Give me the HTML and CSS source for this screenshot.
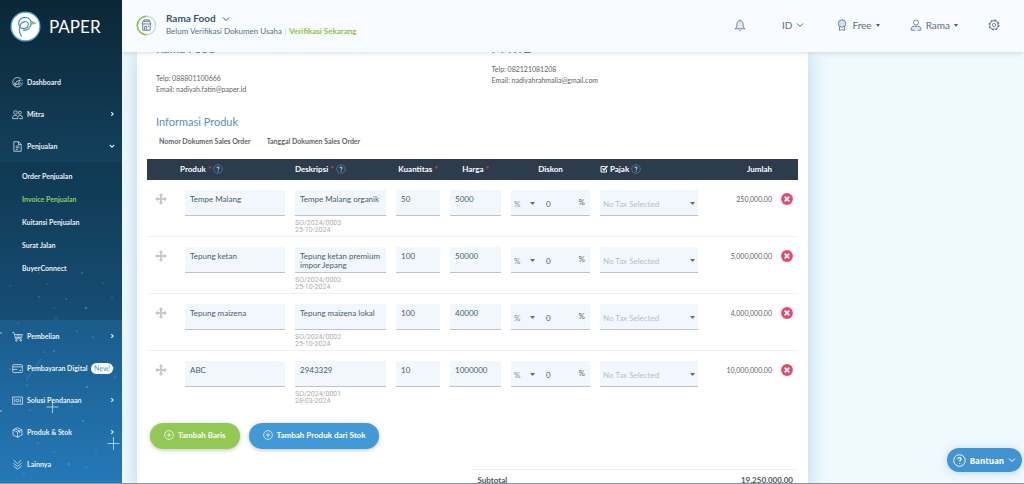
FILE: index.html
```html
<!DOCTYPE html>
<html lang="id">
<head>
<meta charset="utf-8">
<meta name="viewport" content="width=device-width, initial-scale=1">
<title>Paper - Invoice Penjualan</title>
<link rel="stylesheet" href="styles.css">
</head>
<body>
<svg class="defs" aria-hidden="true">
  <symbol id="i-down" viewBox="0 0 8 8"><path d="M1 2.500l3 3 3-3"/></symbol>
  <symbol id="i-right" viewBox="0 0 8 8"><path d="M3 1.500l2.500 2.500L3 6.500"/></symbol>
  <symbol id="i-help" viewBox="0 0 10 10"><circle cx="5" cy="5" r="4.300" stroke="#3a7ca8" stroke-width=".9"/><path d="M3.900 4.100c0-1.500 2.300-1.400 2.300-.1 0 .8-1.100.8-1.100 1.700M5.100 6.700v.8" stroke="#dcebf5" stroke-width="1"/></symbol>
  <symbol id="i-move" viewBox="0 0 12 12"><path d="M6 2v8M2 6h8" stroke-width="1.900"/><path d="M6 0l2.400 2.900H3.600zM6 12l2.400-2.900H3.600zM0 6l2.900-2.400v4.800zM12 6L9.100 3.600v4.800z" fill="currentColor" stroke="none"/></symbol>
  <symbol id="i-del" viewBox="0 0 12 12"><circle cx="6" cy="6" r="5.900" fill="#e2496b" stroke="none"/><path d="M3.700 3.700l4.600 4.600M8.300 3.700L3.700 8.300" stroke="#fff" stroke-width="1.800"/></symbol>
  <symbol id="i-plus" viewBox="0 0 10 10"><circle cx="5" cy="5" r="4.400"/><path d="M5 2.800v4.400M2.800 5h4.400"/></symbol>
</svg>
<div class="app">
  <aside class="sidebar">
    <svg class="stars" viewBox="0 0 122 214" aria-hidden="true">
      <g fill="#9fd0f0" stroke="none" opacity=".7">
        <circle cx="39" cy="4" r=".6"/><circle cx="47" cy="15" r=".6"/><circle cx="10" cy="17" r=".6"/><circle cx="82" cy="4" r=".7"/><circle cx="103" cy="14" r=".6"/><circle cx="39" cy="28" r=".7"/><circle cx="66" cy="30" r=".7"/><circle cx="86" cy="39" r=".9"/><circle cx="112" cy="28" r=".6"/><circle cx="54" cy="39" r=".6"/><circle cx="18" cy="54" r=".6"/><circle cx="56" cy="50" r=".6"/><circle cx="1" cy="64" r=".9"/><circle cx="77" cy="62" r=".6"/><circle cx="44" cy="83" r=".6"/><circle cx="54" cy="82" r=".7"/><circle cx="93" cy="68" r=".6"/><circle cx="10" cy="100" r=".6"/><circle cx="69" cy="96" r=".6"/><circle cx="87" cy="118" r=".8"/><circle cx="27" cy="116" r=".5"/><circle cx="115" cy="108" r=".6"/><circle cx="1" cy="142" r=".9"/><circle cx="30" cy="141" r=".6"/><circle cx="39" cy="133" r=".5"/><circle cx="83" cy="152" r=".7"/><circle cx="13" cy="164" r=".5"/><circle cx="72" cy="137" r=".5"/><circle cx="38" cy="174" r=".6"/><circle cx="54" cy="183" r=".6"/><circle cx="96" cy="184" r=".5"/><circle cx="69" cy="195" r=".7"/><circle cx="86" cy="198" r=".6"/><circle cx="24" cy="204" r=".5"/>
      </g>
      <path d="M26 111l15-21" stroke="#6fa9b4" stroke-width=".6" opacity=".6"/>
      <path d="M52.500 132v12M46.500 138h12M113.500 168v13M107.500 174.500h12" stroke="#d4eafa" stroke-width=".9" opacity=".8"/>
    </svg>
    <a class="brand" href="#">
      <svg class="brand-mark" viewBox="0 0 30 30" aria-hidden="true"><circle cx="15" cy="15" r="14" fill="#fff" stroke="#4f9bd0" stroke-width="1.200"/><path d="M11.500 24.500C8 21 8.500 13 12.500 10.800c3-1.600 6 .2 5.200 3.200-.8 2.800-4.700 4-7.200 2.200C6.500 13 8.500 6.800 14 6.200c5-.4 7.800 3.800 6 8-1.200 3-4 4.600-7.300 4.600" fill="none" stroke="#4a97cb" stroke-width="1.200"/><path d="M20 9l6 3.200-5.200 1.100z" fill="#8bc34a" stroke="none"/></svg>
      <span>PAPER</span>
    </a>
    <nav class="menu">
      <a href="#"><svg viewBox="0 0 12 12"><path d="M10 2.400A5.200 5.200 0 1 0 11.200 6M11.100 4.500a5 5 0 0 0-.6-1.500"/><path d="M8.800 3.200L7 7.200l-3.600 1.600L5 5zM3 6a3 3 0 0 0 .4 2.800M9 6a3 3 0 0 1-2.500 3"/></svg><span>Dashboard</span></a>
      <a href="#"><svg viewBox="0 0 12 12"><circle cx="3.800" cy="3.800" r="1.900"/><circle cx="8.500" cy="4" r="1.600"/><path d="M.7 10.500V9c0-2.700 5.800-2.700 5.800 0v1.500zM7 7.300c1.800-.8 4.300-.2 4.300 1.600v1.600H8"/></svg><span>Mitra</span><svg class="chev"><use href="#i-right"/></svg></a>
      <a href="#"><svg viewBox="0 0 12 12"><path d="M2 .8h5.200L10 3.600v7.600H2zM7 .8v3h3M4 5.500h4M4 7.300h4M4 9.200h2.500"/></svg><span>Penjualan</span><svg class="chev"><use href="#i-down"/></svg></a>
      <div class="submenu">
        <a href="#">Order Penjualan</a>
        <a href="#" class="active">Invoice Penjualan</a>
        <a href="#">Kuitansi Penjualan</a>
        <a href="#">Surat Jalan</a>
        <a href="#">BuyerConnect</a>
      </div>
      <a href="#"><svg viewBox="0 0 12 12"><path d="M.3 1.800h1.900L4 8.500h6.500M3 3.800h8.300l-1 3.300H3.600M4.800 5.400h4.600"/><circle cx="4.800" cy="10.300" r=".9"/><circle cx="9.600" cy="10.300" r=".9"/></svg><span>Pembelian</span><svg class="chev"><use href="#i-right"/></svg></a>
      <a href="#"><svg viewBox="0 0 12 12"><rect x=".8" y="1.800" width="10.500" height="8.600" rx="1"/><path d="M.8 4.200h10.500M.8 7h5M7.800 8.200h2"/></svg><span>Pembayaran Digital</span><b class="badge">New!</b><svg class="chev"><use href="#i-right"/></svg></a>
      <a href="#"><svg viewBox="0 0 12 12"><rect x=".8" y="2.200" width="10.500" height="7.800"/><circle cx="6" cy="6.100" r="1.500"/><path d="M3 4v4.200M9.100 4v4.200"/></svg><span>Solusi Pendanaan</span><svg class="chev"><use href="#i-right"/></svg></a>
      <a href="#"><svg viewBox="0 0 12 12"><path d="M6 .8l4.900 2.300v5.700L6 11.200 1.100 8.800V3.100zM1.100 3.100L6 5.500l4.900-2.400M6 5.500v5.700M3.500 2l4.900 2.400v2.400"/></svg><span>Produk &amp; Stok</span><svg class="chev"><use href="#i-right"/></svg></a>
      <a href="#"><svg viewBox="0 0 12 12"><path d="M1.500 4.600L6 8l4.500-3.400M1.500 7.600L6 11l4.500-3.400M1.800 1.300L6 5l4.200-3.700"/></svg><span>Lainnya</span></a>
    </nav>
  </aside>

  <div class="page">
    <header class="topbar">
      <svg class="shop" viewBox="0 0 20 20" aria-hidden="true"><circle cx="10" cy="10" r="8.800" stroke="#cfd8dd" stroke-width="1.300"/><path d="M10 18.800A8.800 8.800 0 0 1 10 1.200" stroke="#8cc63f" stroke-width="1.500"/><path d="M6.500 8.500v6h7v-6M5.800 8.500h8.400l-.9-2.500H6.700zM7.500 6V4.700h5V6M8.200 14.500v-3.500h2v3.500M11.400 11h1" stroke="#5c7a8f" stroke-width=".9"/></svg>
      <div class="company">
        <button class="company-name" type="button">Rama Food <svg><use href="#i-down"/></svg></button>
        <p>Belum Verifikasi Dokumen Usaha <i></i> <a href="#">Verifikasi Sekarang</a></p>
      </div>
      <div class="tools">
        <button type="button" aria-label="Notifikasi"><svg class="ico" viewBox="0 0 12 12"><path d="M6 .5v1M2.500 8.500c.4-.7.3-2 .4-3.500C3.100 3 4.300 1.700 6 1.700S8.900 3 9.100 5c.1 1.500 0 2.800.4 3.500l1.500 1.300H1zM5 11.400c.7.4 1.500.2 1.800-.6" fill="#dcebf6"/></svg></button>
        <button type="button" class="lang">ID <svg><use href="#i-down"/></svg></button>
        <button type="button"><svg class="ico" viewBox="0 0 12 12"><circle cx="6" cy="4.500" r="3.700" fill="#cfe3f2"/><path d="M3.500 7.500v4l2.500-1 2.500 1v-4" /></svg>Free <span class="caret"></span></button>
        <button type="button"><svg class="ico" viewBox="0 0 12 12"><circle cx="6" cy="3.500" r="2.500"/><path d="M1.200 11.200V9.500C1.200 7.500 4 7.300 6 7.300s4.800.2 4.800 2.200v1.700h-3M1.200 11.200h4" fill="#dcebf6"/></svg>Rama <span class="caret"></span></button>
        <button type="button" aria-label="Pengaturan"><svg class="ico" viewBox="0 0 12 12"><circle cx="6" cy="6" r="4.900" stroke-width="1.100" stroke-dasharray="2.200 1.600"/><circle cx="6" cy="6" r="4.100"/><circle cx="6" cy="6" r="1.600"/></svg></button>
      </div>
    </header>

    <main class="content">
      <section class="card">
        <div class="parties">
          <div class="party from"><h2>Rama Food</h2><p>Telp: 088801100666<br>Email: nadiyah.fatin@paper.id</p></div>
          <div class="party to"><h2>PT XYZ</h2><p>Telp: 082121081208<br>Email: nadiyahrahmalia@gmail.com</p></div>
        </div>
        <h3>Informasi Produk</h3>
        <div class="orders"><span>Nomor Dokumen Sales Order</span><span>Tanggal Dokumen Sales Order</span></div>

        <table class="items">
          <colgroup><col class="c-move"><col class="c-prod"><col class="c-desc"><col class="c-qty"><col class="c-price"><col class="c-disc"><col class="c-tax"><col class="c-sum"><col class="c-del"></colgroup>
          <thead>
            <tr>
              <th colspan="2" class="h-prod">Produk <em>*</em> <svg><use href="#i-help"/></svg></th>
              <th class="left">Deskripsi <em>*</em> <svg><use href="#i-help"/></svg></th>
              <th>Kuantitas <em>*</em></th>
              <th>Harga <em>*</em></th>
              <th>Diskon</th>
              <th class="left"><label><input type="checkbox" checked> Pajak</label> <svg><use href="#i-help"/></svg></th>
              <th class="right">Jumlah</th>
              <th></th>
            </tr>
          </thead>
          <tbody>
            <tr>
              <td class="move"><svg><use href="#i-move"/></svg></td>
              <td><textarea class="field" aria-label="Produk">Tempe Malang</textarea></td>
              <td><textarea class="field" aria-label="Deskripsi">Tempe Malang organik</textarea><small>SO/2024/0003<br>25-10-2024</small></td>
              <td><input class="field" aria-label="Kuantitas" value="50"></td>
              <td><input class="field" aria-label="Harga" value="5000"></td>
              <td><div class="discount"><select class="field" aria-label="Jenis diskon"><option>%</option></select><input class="field" aria-label="Diskon" value="0"><span>%</span></div></td>
              <td><select class="field tax" aria-label="Pajak"><option>No Tax Selected</option></select></td>
              <td class="sum">250,000.00</td>
              <td class="del"><button type="button" aria-label="Hapus"><svg><use href="#i-del"/></svg></button></td>
            </tr>
            <tr>
              <td class="move"><svg><use href="#i-move"/></svg></td>
              <td><textarea class="field" aria-label="Produk">Tepung ketan</textarea></td>
              <td><textarea class="field" aria-label="Deskripsi">Tepung ketan premium impor Jepang</textarea><small>SO/2024/0002<br>25-10-2024</small></td>
              <td><input class="field" aria-label="Kuantitas" value="100"></td>
              <td><input class="field" aria-label="Harga" value="50000"></td>
              <td><div class="discount"><select class="field" aria-label="Jenis diskon"><option>%</option></select><input class="field" aria-label="Diskon" value="0"><span>%</span></div></td>
              <td><select class="field tax" aria-label="Pajak"><option>No Tax Selected</option></select></td>
              <td class="sum">5,000,000.00</td>
              <td class="del"><button type="button" aria-label="Hapus"><svg><use href="#i-del"/></svg></button></td>
            </tr>
            <tr>
              <td class="move"><svg><use href="#i-move"/></svg></td>
              <td><textarea class="field" aria-label="Produk">Tepung maizena</textarea></td>
              <td><textarea class="field" aria-label="Deskripsi">Tepung maizena lokal</textarea><small>SO/2024/0002<br>25-10-2024</small></td>
              <td><input class="field" aria-label="Kuantitas" value="100"></td>
              <td><input class="field" aria-label="Harga" value="40000"></td>
              <td><div class="discount"><select class="field" aria-label="Jenis diskon"><option>%</option></select><input class="field" aria-label="Diskon" value="0"><span>%</span></div></td>
              <td><select class="field tax" aria-label="Pajak"><option>No Tax Selected</option></select></td>
              <td class="sum">4,000,000.00</td>
              <td class="del"><button type="button" aria-label="Hapus"><svg><use href="#i-del"/></svg></button></td>
            </tr>
            <tr>
              <td class="move"><svg><use href="#i-move"/></svg></td>
              <td><textarea class="field" aria-label="Produk">ABC</textarea></td>
              <td><textarea class="field" aria-label="Deskripsi">2943329</textarea><small>SO/2024/0001<br>28-03-2024</small></td>
              <td><input class="field" aria-label="Kuantitas" value="10"></td>
              <td><input class="field" aria-label="Harga" value="1000000"></td>
              <td><div class="discount"><select class="field" aria-label="Jenis diskon"><option>%</option></select><input class="field" aria-label="Diskon" value="0"><span>%</span></div></td>
              <td><select class="field tax" aria-label="Pajak"><option>No Tax Selected</option></select></td>
              <td class="sum">10,000,000.00</td>
              <td class="del"><button type="button" aria-label="Hapus"><svg><use href="#i-del"/></svg></button></td>
            </tr>
          </tbody>
        </table>

        <div class="actions">
          <button type="button" class="pill green"><svg><use href="#i-plus"/></svg>Tambah Baris</button>
          <button type="button" class="pill blue"><svg><use href="#i-plus"/></svg>Tambah Produk dari Stok</button>
        </div>
        <div class="totals"><span>Subtotal</span><span>19,250,000.00</span></div>
      </section>
    </main>
  </div>
  <button type="button" class="help"><svg class="q" viewBox="0 0 14 14"><circle cx="7" cy="7" r="6.200"/><path d="M5.300 5.600c0-2.400 3.500-2.200 3.500-.1 0 1.300-1.700 1.300-1.700 2.700M7.100 9.600v1.100" stroke-width="1.200"/></svg>Bantuan<svg><use href="#i-down"/></svg></button>
</div>
</body>
</html>
```
FILE: styles.css
```css
* { box-sizing: border-box; }
body {
  margin: 0;
  font: 8px/11px Lato, "Liberation Sans", sans-serif;
  color: #5e6468;
}
h2, h3, p { margin: 0; font-weight: 400; }
a { color: inherit; text-decoration: none; }
button { font: inherit; color: inherit; border: 0; background: none; padding: 0; }
svg { width: 8px; height: 8px; flex: none; fill: none; stroke: currentColor; }
.defs { position: absolute; width: 0; height: 0; }

.app {
  position: relative;
  display: flex;
  height: 100vh;
  overflow: hidden;
  border-bottom: 1px solid #8b959c;
}

/* Sidebar */
.sidebar {
  position: relative;
  flex: none;
  width: 122px;
  overflow: hidden;
  color: #e6eff5;
  background: linear-gradient(#0b2736, #13415e 35%, #1a5a88 65%, #2479b7);
}
.stars { position: absolute; left: 0; bottom: 0; width: 122px; height: 214px; }
.brand { position: relative; display: flex; align-items: center; gap: 8px; height: 52px; padding-left: 10px; font-size: 17px; color: #fff; }
.brand-mark { width: 31px; height: 31px; }
.menu { position: relative; padding-top: 14px; font-size: 7px; font-weight: 700; }
.menu > a { display: flex; align-items: center; gap: 4px; height: 32px; padding: 0 7px 0 12px; white-space: nowrap; }
.menu > a > svg { width: 11px; height: 11px; stroke-width: .8; }
.menu > a > .chev { width: 6px; height: 6px; margin-left: auto; stroke-width: 1.5; }
.submenu { padding: 3px 0 40px; background: rgba(10, 30, 45, .22); }
.submenu a { display: block; padding-left: 22px; line-height: 23px; }
.submenu .active { color: #86cf6a; }
.badge { position: absolute; left: 91px; padding: 0 3px; border-radius: 6px; background: #fff; color: #4b9cd3; font-weight: 400; }

/* Top bar */
.page { flex: 1; min-width: 0; display: flex; flex-direction: column; background: #f0f9fd; }
.topbar {
  position: relative;
  z-index: 1;
  flex: none;
  display: flex;
  align-items: center;
  height: 52px;
  padding: 0 24px 2px 14px;
  background: #f8fbff;
  box-shadow: 0 1px 5px rgba(40, 70, 90, .18);
  color: #557086;
}
.shop { width: 21px; height: 21px; }
.company { margin-left: 9px; }
.company-name { display: flex; align-items: center; gap: 6px; font-size: 10px; font-weight: 700; line-height: 13px; color: #35566f; }
.company p { display: flex; align-items: center; gap: 3px; line-height: 13px; }
.company i { width: 1px; height: 7px; background: #dbe3e8; }
.company p a { color: #8bc640; font-weight: 700; }
.tools { display: flex; align-items: center; gap: 30px; margin-left: auto; }
.tools button { display: flex; align-items: center; gap: 4px; font-size: 10px; }
.tools .lang { margin: 0 2px 0 6px; }
.ico { width: 12px; height: 12px; stroke-width: .8; }
.caret { border: 2px solid transparent; border-top: 3px solid #456078; border-bottom: 0; }

/* Document */
.content { flex: 1; min-height: 0; overflow: hidden; display: grid; grid-template-columns: 671fr 216fr; padding-left: 15px; }
.card { padding: 0 10px; background: #fff; box-shadow: 0 0 18px rgba(80, 160, 210, .4); }
.parties { display: grid; grid-template-columns: 1fr 1fr; margin: -11px -10px 0; }
.party { padding-left: 19px; }
.party p { font-size: 7px; }
.party h2 { font-size: 12px; line-height: 16px; color: #4a86b0; }
.from p { margin-top: 16px; }
.to p { margin-top: 7px; }
h3 { margin: 19px 0 5px 9px; font-size: 11px; line-height: 16px; color: #5b90b8; }
.orders { display: flex; gap: 16px; margin: 0 0 12px 12px; font-size: 7px; line-height: 12px; font-weight: 700; }

.items { width: 100%; table-layout: fixed; border-collapse: separate; border-spacing: 0; }
.c-move { width: 38px; }
.c-desc { width: 101px; }
.c-qty { width: 54px; }
.c-price { width: 61px; }
.c-disc { width: 89px; }
.c-tax { width: 108px; }
.c-sum { width: 64px; }
.c-del { width: 26px; }
.items th { height: 21px; padding: 0 10px 2px 0; background: #2c3c4d; color: #fff; line-height: 12px; white-space: nowrap; }
.items th svg { width: 10px; height: 10px; vertical-align: middle; }
.items th em { color: #ff2a2a; font-style: normal; }
.items .left, .items .h-prod { text-align: left; }
.items .h-prod { padding-left: 33px; }
.items th.right { text-align: right; padding-right: 0; }
.items th input {
  appearance: none;
  width: 8px;
  height: 8px;
  margin: 0;
  vertical-align: middle;
  background: url("data:image/svg+xml,%3Csvg xmlns='http://www.w3.org/2000/svg' viewBox='0 0 8 8' fill='none' stroke='white'%3E%3Cpath d='M6.500 4.500V7H1V1.500h4.500'/%3E%3Cpath d='M2.500 3.500l1.500 1.500L7.500 1' stroke-width='1.300'/%3E%3C/svg%3E") center / 8px no-repeat;
}
.items td { height: 57px; padding: 10px 10px 0 0; vertical-align: top; border-bottom: 1px solid #f1f1f1; }
.items tbody tr:last-child td { border-bottom: 0; }
.items td.move { padding: 13px 0 0 8px; color: #c3cbd1; }
.items .move svg { width: 12px; height: 12px; }
.field {
  display: block;
  width: 100%;
  height: 26px;
  margin: 0;
  padding: 5px 4px 0 5px;
  border: 0;
  border-bottom: 1px solid #b9c4cc;
  border-radius: 0;
  background: #f1f7fc;
  font: 8px/9px Lato, "Liberation Sans", sans-serif;
  color: #485e6e;
  resize: none;
  overflow: hidden;
}
input.field { padding: 0 5px 7px; }
select.field {
  appearance: none;
  padding: 4px 3px 0;
  color: #7d8d99;
  background: #f1f7fc url("data:image/svg+xml,%3Csvg xmlns='http://www.w3.org/2000/svg' viewBox='0 0 5 3'%3E%3Cpath d='M0 0h5L2.500 3z' fill='%235b6b78'/%3E%3C/svg%3E") right 3px top 12px / 5px 3px no-repeat;
}
select.tax { color: #b4c1ca; }
.discount { position: relative; display: grid; grid-template-columns: 27px 1fr; }
.discount input.field { padding: 2px 8px 0; }
.discount span { position: absolute; right: 5px; top: 6px; line-height: 12px; }
.items small { display: block; margin-top: 4px; font: 7px/7px Roboto, sans-serif; color: #adadad; }
.items td.sum { padding-right: 0; font-size: 7px; line-height: 18px; text-align: right; }
.items td.del { padding: 13px 0 0 9px; }
.del button { display: block; }
.del svg { display: block; width: 12px; height: 12px; }

.actions { display: flex; gap: 9px; padding: 15px 3px 0; }
.pill { display: flex; align-items: center; gap: 4px; height: 26px; padding: 0 14px 2px; border-radius: 13px; color: #fff; font-weight: 700; box-shadow: 0 1px 4px rgba(0, 0, 0, .25); }
.pill svg { width: 10px; height: 10px; stroke-width: .7; }
.green { background: #92c954; }
.blue { background: #4299d7; }
.totals { display: flex; justify-content: space-between; width: 50%; margin: 20px 0 0 auto; padding: 5px 5px; border-top: 1px solid #eee; font-weight: 700; color: #555; }

/* Floating help button */
.help { position: absolute; z-index: 2; right: 2px; bottom: 11px; display: flex; align-items: center; gap: 4px; height: 24px; padding: 0 6px; border-radius: 12px; background: #4294d0; color: #fff; font: 700 8px/11px "Open Sans", sans-serif; box-shadow: 0 1px 8px rgba(60, 140, 200, .3); }
.help .q { width: 13px; height: 13px; }
```
